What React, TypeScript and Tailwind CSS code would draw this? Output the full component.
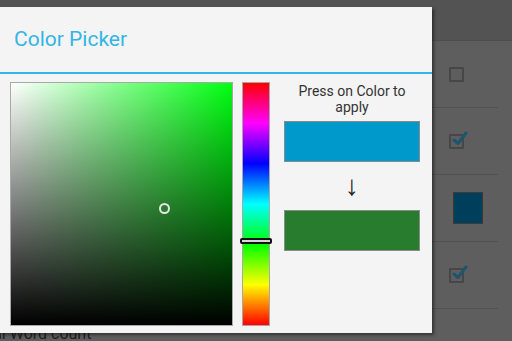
import React from 'react'

const font = { fontFamily: 'Roboto, "Noto Sans", sans-serif' }

function Checkbox({ checked }: { checked?: boolean }) {
  return (
    <div className="relative w-[15px] h-[15px] border-2 border-[#474747] rounded-[1px]">
      {checked && (
        <svg className="absolute -top-[5px] left-[1px]" width="16" height="15" viewBox="0 0 16 15">
          <path d="M2 9 L6 12.5 L14 2" fill="none" stroke="#1d5570" strokeWidth="3" strokeLinecap="round" strokeLinejoin="round" />
        </svg>
      )}
    </div>
  )
}

function Row({ children, last }: { children?: React.ReactNode; last?: boolean }) {
  return (
    <div className={`h-[67px] flex items-center justify-end mr-[14px] ${last ? '' : 'border-b border-[#525252]'}`}>
      <div className="w-[50px] flex items-center">{children}</div>
    </div>
  )
}

export default function App() {
  return (
    <div className="relative w-[512px] h-[341px] overflow-hidden bg-[#5e5e5e]" style={font}>
      {/* screen behind the dialog */}
      <div className="h-[41px] bg-[#535353] border-b border-[#4e4e4e]" />
      <Row>
        <div className="ml-[1px]"><Checkbox /></div>
      </Row>
      <Row>
        <div className="ml-[1px]"><Checkbox checked /></div>
      </Row>
      <Row>
        <div className="ml-[5px] w-[30px] h-[32px] bg-[#003f5c] border border-[#3a3a3a]" />
      </Row>
      <Row>
        <div className="ml-[1px]"><Checkbox checked /></div>
      </Row>
      <div className="pt-[13px] -ml-[30px] text-[16px] leading-[24px] text-[#1e1e1e]">Total Word count</div>

      {/* dialog */}
      <div className="absolute left-0 top-[7px] w-[432px] h-[326px] bg-[#f4f4f4] shadow-[2px_2px_3px_rgba(0,0,0,0.45)] flex flex-col">
        <div className="h-[65px] flex items-center pl-[14px] pt-[1px]">
          <span className="text-[21px] text-[#33b5e5]">Color Picker</span>
        </div>
        <div className="h-[2px] bg-[#33b5e5]" />
        <div className="flex pt-[8px] pl-[10px]">
          <div className="relative w-[223px] h-[244px] border border-[#a8a8a8] bg-[linear-gradient(to_bottom,rgba(0,0,0,0),#000),linear-gradient(to_right,#fff,#00ff11)]">
            <div className="absolute left-[148px] top-[120px] w-[11px] h-[11px] rounded-full border-2 border-[#e6e6e6] bg-[#277c2e]" />
          </div>
          <div className="relative ml-[9px] w-[28px] h-[244px] border border-[#a8a8a8] bg-[linear-gradient(to_bottom,#f00,#f0f,#00f,#0ff,#0f0,#ff0,#f00)]">
            <div className="absolute -left-[3px] top-[155px] w-[32px] h-[6px] rounded-[2px] border-2 border-[#111] bg-[#d8d8d8]" />
          </div>
          <div className="ml-[14px] w-[136px] flex flex-col items-center">
            <div className="pt-[1px] text-[14px] leading-[16px] text-[#333] text-center">
              Press on Color to
              <br />
              apply
            </div>
            <div className="mt-[6px] w-[136px] h-[41px] bg-[#0099cc] border border-[#8a8a8a]" />
            <div className="mt-[8px] h-[40px] text-[28px] leading-[32px] text-[#222]" style={{ fontFamily: '"Liberation Sans", "DejaVu Sans", sans-serif' }}>↓</div>
            <div className="w-[136px] h-[41px] bg-[#277c2e] border border-[#8a8a8a]" />
          </div>
        </div>
      </div>
    </div>
  )
}
